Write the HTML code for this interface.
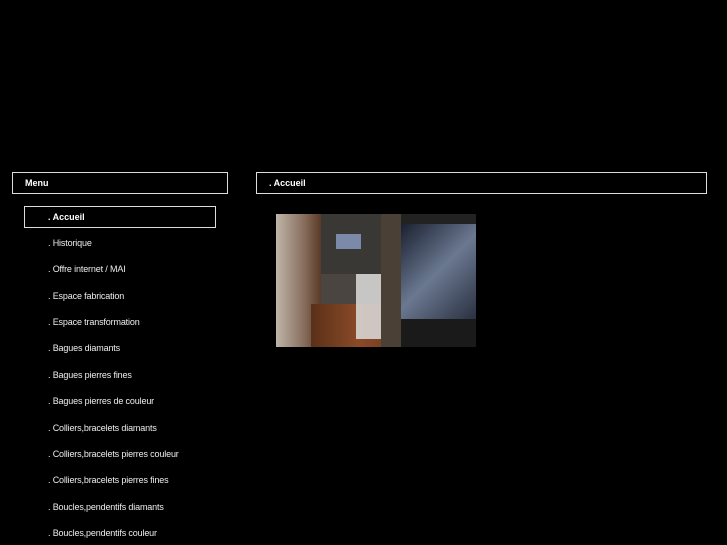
<!DOCTYPE html>
<html><head><meta charset="utf-8"><style>
body{margin:0;background:#000;width:727px;height:545px;overflow:hidden;position:relative;font-family:"Liberation Sans",Arial,sans-serif;color:#fff;font-size:9px}
.box{position:absolute;border:1px solid #ddd;box-sizing:border-box;font-weight:bold}
.it{position:absolute;left:48px;font-size:9px;color:#eee;letter-spacing:-0.15px}
</style></head><body>
<div class="box" style="left:12px;top:172px;width:216px;height:22px;padding:5px 0 0 12px">Menu</div>
<div class="box" style="left:256px;top:172px;width:451px;height:22px;padding:5px 0 0 12px">. Accueil</div>
<div class="box" style="left:24px;top:206px;width:192px;height:22px;padding:5px 0 0 23px">. Accueil</div>
<div class="it" style="top:238px">. Historique</div>
<div class="it" style="top:264px">. Offre internet / MAI</div>
<div class="it" style="top:291px">. Espace fabrication</div>
<div class="it" style="top:317px">. Espace transformation</div>
<div class="it" style="top:343px">. Bagues diamants</div>
<div class="it" style="top:370px">. Bagues pierres fines</div>
<div class="it" style="top:396px">. Bagues pierres de couleur</div>
<div class="it" style="top:423px">. Colliers,bracelets diamants</div>
<div class="it" style="top:449px">. Colliers,bracelets pierres couleur</div>
<div class="it" style="top:475px">. Colliers,bracelets pierres fines</div>
<div class="it" style="top:502px">. Boucles,pendentifs diamants</div>
<div class="it" style="top:528px">. Boucles,pendentifs couleur</div>
<div style="position:absolute;left:276px;top:214px;width:200px;height:133px;background:#222;overflow:hidden">
 <div style="position:absolute;left:0;top:0;width:45px;height:133px;background:linear-gradient(90deg,#bfb5a8,#8a7060 60%,#5a3a28)"></div>
 <div style="position:absolute;left:45px;top:0;width:80px;height:60px;background:#3a3835"></div>
 <div style="position:absolute;left:60px;top:20px;width:25px;height:15px;background:#7a8aa8"></div>
 <div style="position:absolute;left:45px;top:60px;width:80px;height:30px;background:#4a4540"></div>
 <div style="position:absolute;left:35px;top:90px;width:95px;height:43px;background:linear-gradient(90deg,#5a3018,#8a4a28,#6a3820)"></div>
 <div style="position:absolute;left:80px;top:60px;width:25px;height:65px;background:#ddd;opacity:.85"></div>
 <div style="position:absolute;left:105px;top:0;width:20px;height:133px;background:#4a4035"></div>
 <div style="position:absolute;left:125px;top:10px;width:75px;height:95px;background:linear-gradient(135deg,#1a2030,#6a7890 50%,#2a3040)"></div>
 <div style="position:absolute;left:125px;top:105px;width:75px;height:28px;background:#1a1a1a"></div>
</div>
</body></html>
